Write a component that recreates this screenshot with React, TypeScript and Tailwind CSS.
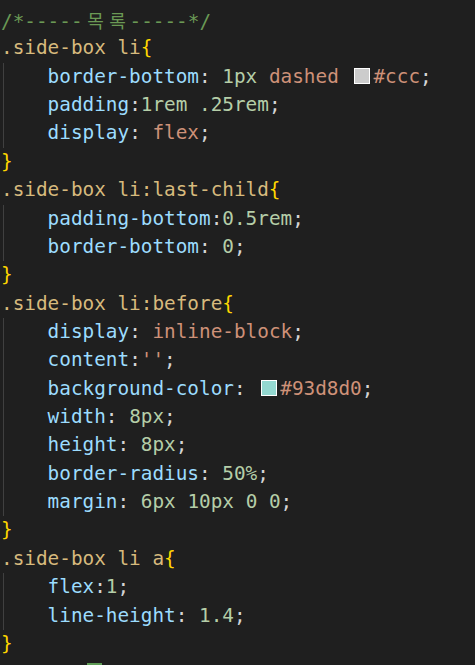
import React from 'react';

const Line = ({ children }: { children?: React.ReactNode }) => (
  <div className="h-[28.36px] leading-[28.36px] whitespace-pre">{children}</div>
);

const Sel = ({ children }: { children: React.ReactNode }) => <span className="text-[#d7ba7d]">{children}</span>;
const Prop = ({ children }: { children: React.ReactNode }) => <span className="text-[#9cdcfe]">{children}</span>;
const Num = ({ children }: { children: React.ReactNode }) => <span className="text-[#b5cea8]">{children}</span>;
const Str = ({ children }: { children: React.ReactNode }) => <span className="text-[#ce9178]">{children}</span>;
const P = ({ children }: { children: React.ReactNode }) => <span className="text-[#d4d4d4]">{children}</span>;
const Open = () => <span className="text-[#ffd700]">{'{'}</span>;
const Close = () => (
  <Line>
    <span className="text-[#ffd700]">{'}'}</span>
  </Line>
);

// color decorator square shown before a colour value
const Swatch = ({ color }: { color: string }) => (
  <span
    className="inline-block w-[16px] h-[16px] ml-[4px] mr-[3px] border border-white align-[-1px]"
    style={{ backgroundColor: color }}
  />
);

const Body = ({ children }: { children: React.ReactNode }) => (
  <div className="ml-[2px] border-l border-[#404040] pl-[43.6px]">{children}</div>
);

const Ko = ({ children }: { children: string }) => (
  <span className="inline-block w-[22px] text-center font-['Noto_Sans_CJK_KR',sans-serif] text-[18px]">{children}</span>
);

export default function App() {
  return (
    <div className="w-[475px] h-[665px] overflow-hidden bg-[#1f1f1f] pt-[6px] pl-[1px] text-[19.35px] font-['DejaVu_Sans_Mono','Liberation_Mono',monospace]">
      <Line>
        <span className="text-[#6a9955]">
          /*-----<span className="inline-block w-[2px]" />
          <Ko>목</Ko>
          <Ko>록</Ko>
          <span className="inline-block w-[1px]" />-----*/
        </span>
      </Line>

      <Line>
        <Sel>.side-box li</Sel>
        <Open />
      </Line>
      <Body>
        <Line>
          <Prop>border-bottom</Prop>
          <P>: </P>
          <Num>1px</Num> <Str>dashed</Str> <Swatch color="#cccccc" />
          <Str>#ccc</Str>
          <P>;</P>
        </Line>
        <Line>
          <Prop>padding</Prop>
          <P>:</P>
          <Num>1rem</Num> <Num>.25rem</Num>
          <P>;</P>
        </Line>
        <Line>
          <Prop>display</Prop>
          <P>: </P>
          <Str>flex</Str>
          <P>;</P>
        </Line>
      </Body>
      <Close />

      <Line>
        <Sel>.side-box li:last-child</Sel>
        <Open />
      </Line>
      <Body>
        <Line>
          <Prop>padding-bottom</Prop>
          <P>:</P>
          <Num>0.5rem</Num>
          <P>;</P>
        </Line>
        <Line>
          <Prop>border-bottom</Prop>
          <P>: </P>
          <Num>0</Num>
          <P>;</P>
        </Line>
      </Body>
      <Close />

      <Line>
        <Sel>.side-box li:before</Sel>
        <Open />
      </Line>
      <Body>
        <Line>
          <Prop>display</Prop>
          <P>: </P>
          <Str>inline-block</Str>
          <P>;</P>
        </Line>
        <Line>
          <Prop>content</Prop>
          <P>:</P>
          <Str>''</Str>
          <P>;</P>
        </Line>
        <Line>
          <Prop>background-color</Prop>
          <P>: </P>
          <Swatch color="#93d8d0" />
          <Str>#93d8d0</Str>
          <P>;</P>
        </Line>
        <Line>
          <Prop>width</Prop>
          <P>: </P>
          <Num>8px</Num>
          <P>;</P>
        </Line>
        <Line>
          <Prop>height</Prop>
          <P>: </P>
          <Num>8px</Num>
          <P>;</P>
        </Line>
        <Line>
          <Prop>border-radius</Prop>
          <P>: </P>
          <Num>50%</Num>
          <P>;</P>
        </Line>
        <Line>
          <Prop>margin</Prop>
          <P>: </P>
          <Num>6px</Num> <Num>10px</Num> <Num>0</Num> <Num>0</Num>
          <P>;</P>
        </Line>
      </Body>
      <Close />

      <Line>
        <Sel>.side-box li a</Sel>
        <Open />
      </Line>
      <Body>
        <Line>
          <Prop>flex</Prop>
          <P>:</P>
          <Num>1</Num>
          <P>;</P>
        </Line>
        <Line>
          <Prop>line-height</Prop>
          <P>: </P>
          <Num>1.4</Num>
          <P>;</P>
        </Line>
      </Body>
      <Close />

      <div className="h-[28.36px] pt-[5px] pl-[86px]">
        <div className="w-[15px] h-[14px] bg-[#5e9c55]" />
      </div>
    </div>
  );
}
